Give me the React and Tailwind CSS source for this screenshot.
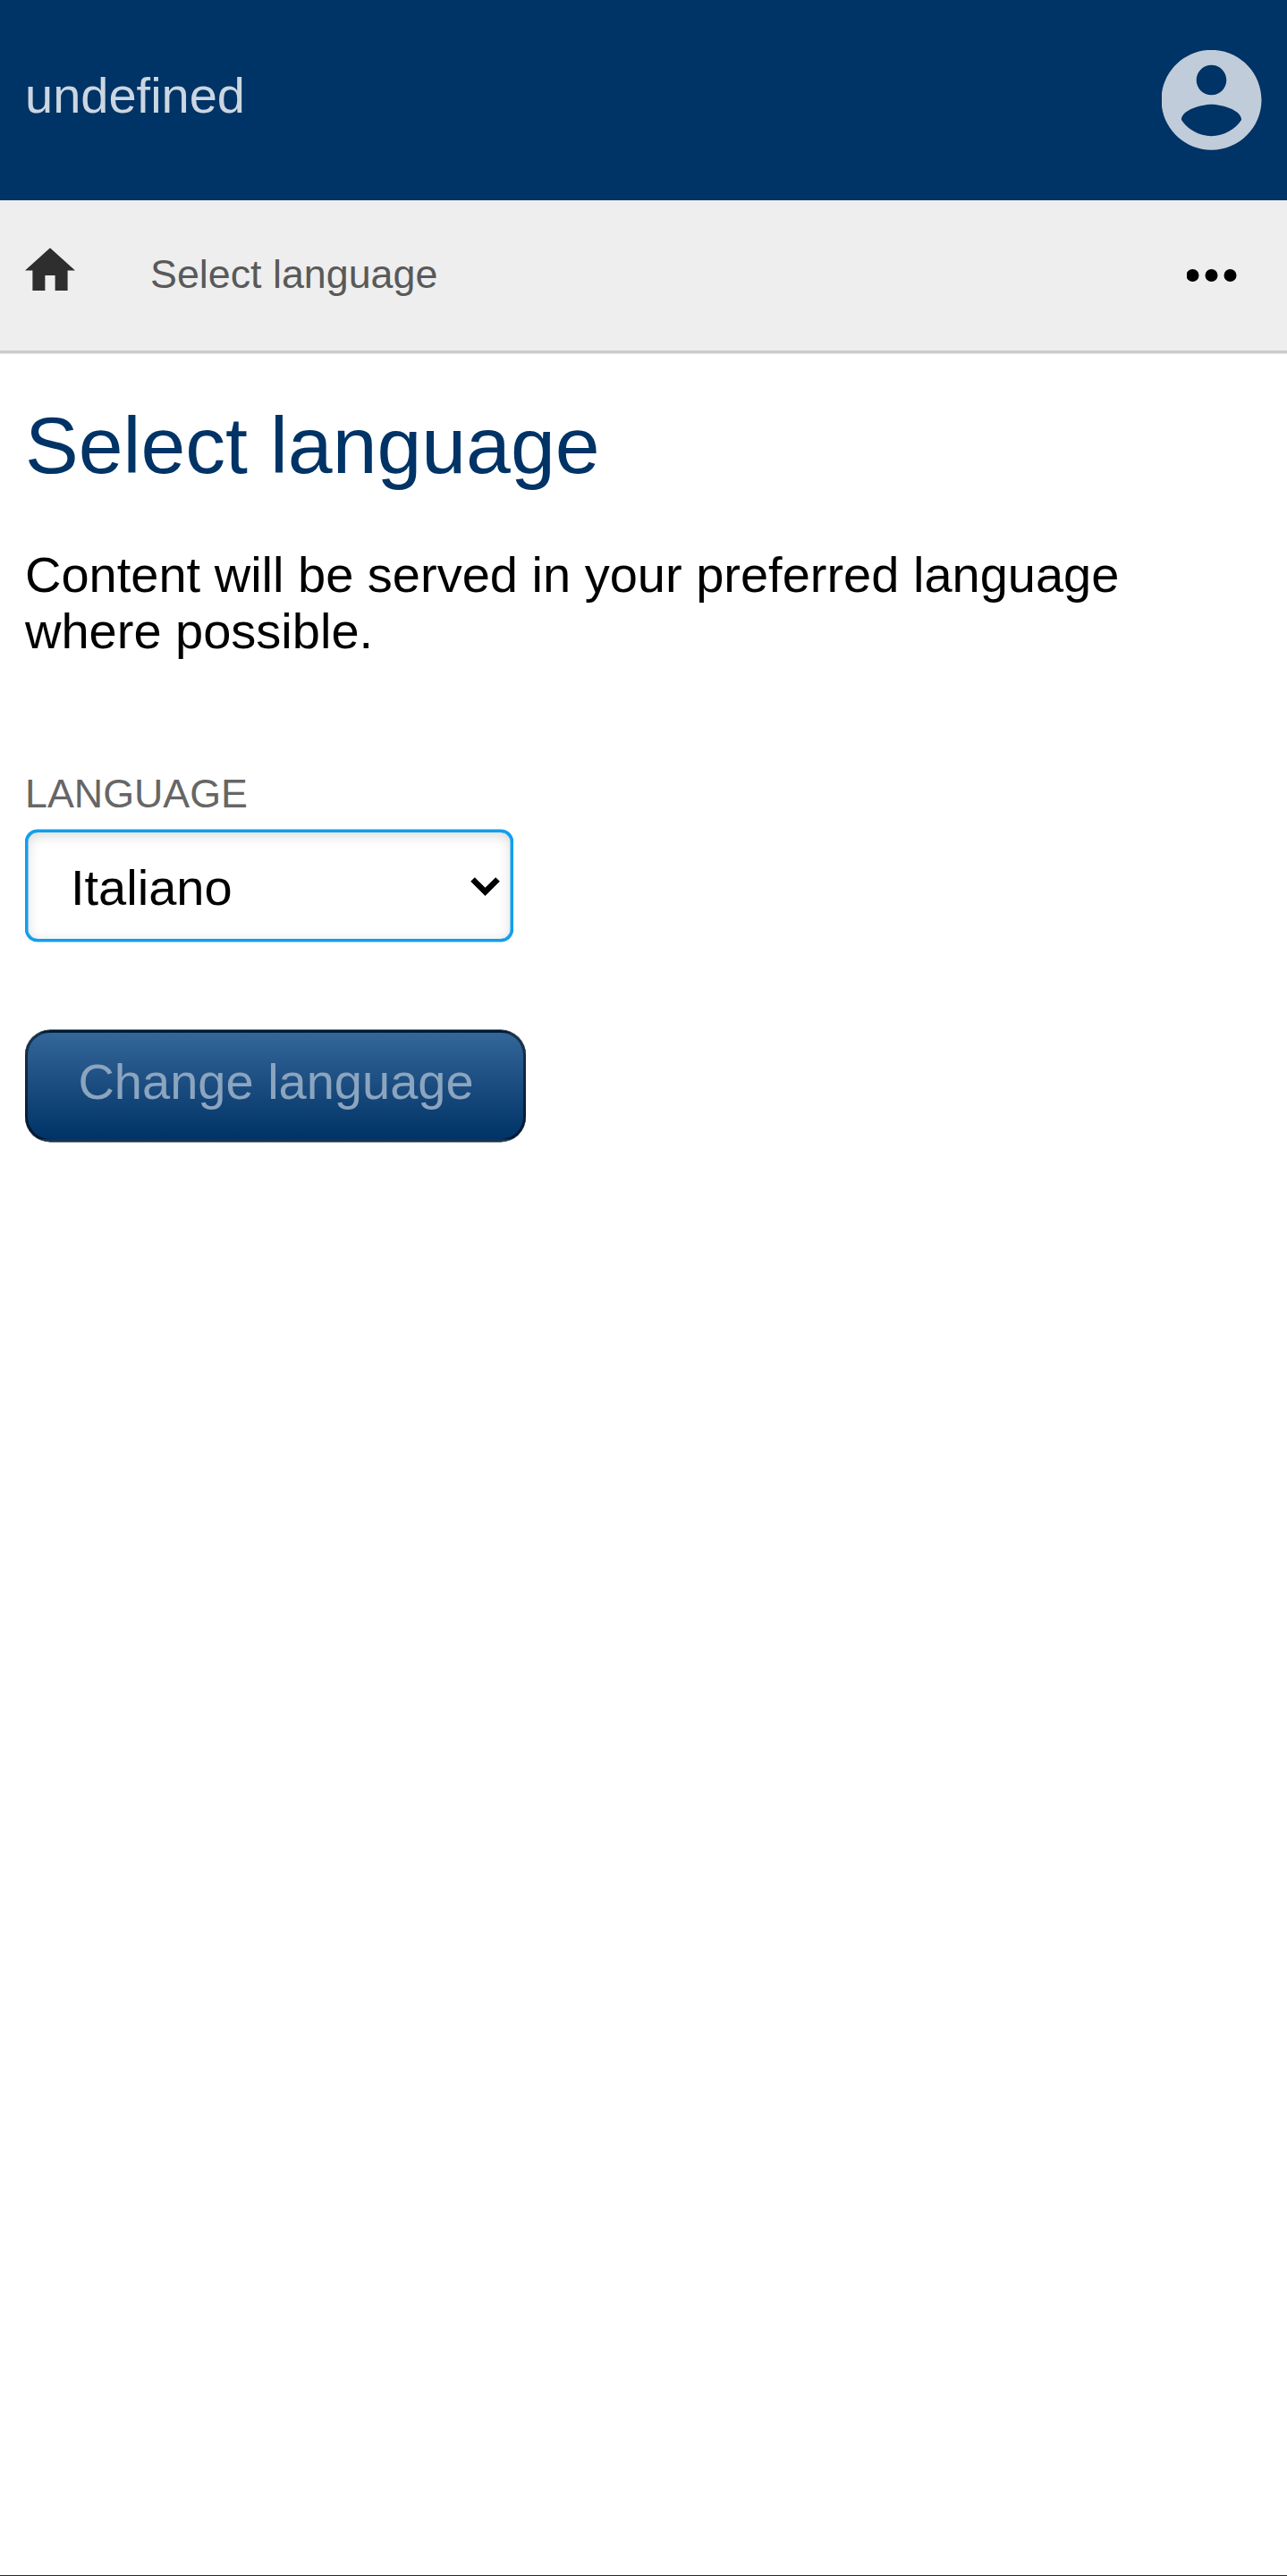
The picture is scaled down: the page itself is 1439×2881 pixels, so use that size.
export default function App() {
  return (
    <div className="flex h-[2881px] w-full flex-col overflow-hidden bg-white font-['Liberation_Sans',Arial,sans-serif] text-[56px] leading-[63px] text-black">
      <header className="flex h-[224px] shrink-0 items-start justify-between bg-[#003366] px-[28px]">
        <span className="mt-[75px] text-[#ccd6e0]">undefined</span>
        <svg className="mt-[56px] size-[112px]" viewBox="2.09 2.03 20 20" fill="#c0ccd9" aria-label="Account">
          <path d="M12 2C6.48 2 2 6.48 2 12s4.48 10 10 10 10-4.48 10-10S17.52 2 12 2zm0 3c1.66 0 3 1.34 3 3s-1.34 3-3 3-3-1.34-3-3 1.34-3 3-3zm0 14.2c-2.5 0-4.71-1.28-6-3.22.03-1.99 4-3.08 6-3.08 1.99 0 5.97 1.09 6 3.08-1.29 1.94-3.5 3.22-6 3.22z" />
        </svg>
      </header>

      <nav className="flex h-[168px] shrink-0 items-start bg-[#eeeeee] pl-[28px] pr-[55px]">
        <svg className="mt-[53px] h-[48px] w-[56px]" viewBox="2 2.9 20 17.143" fill="#2e2e2e" aria-label="Home">
          <path d="M10 20v-6h4v6h5v-8h3L12 3 2 12h3v8z" />
        </svg>
        <span className="ml-[84px] mt-[57px] text-[44.8px] leading-[51px] text-[#595959]">Select language</span>
        <svg className="ml-auto mt-[77px] h-[14px] w-[57px]" viewBox="0 0 57 14" aria-label="More">
          <circle cx="6.5" cy="7" r="7" />
          <circle cx="27.5" cy="7" r="7" />
          <circle cx="48.5" cy="7" r="7" />
        </svg>
      </nav>
      <div className="h-[4px] shrink-0 border-b border-[#e5e5e5] bg-[#cccccc]" />

      <main className="flex grow flex-col items-start px-[28px]">
        <h1 className="mt-[51px] text-[89.6px] leading-[102px] text-[#003366]">Select language</h1>
        <p className="mt-[62px] w-[1300px]">
          Content will be served in your preferred language where possible.
        </p>
        <label htmlFor="language" className="mt-[125px] text-[44.8px] leading-[51px] text-[#666666]">
          LANGUAGE
        </label>
        <div className="relative mt-[15px]">
          <select
            id="language"
            className="block h-[125px] w-[546px] appearance-none rounded-[14px] border-[3px] border-[#129fea] bg-white pt-[4px] pl-[48px] shadow-[0_-0.5px_0_0_#129fea,0_0.5px_0_0_#129fea,inset_0.5px_0_0_0_#129fea,inset_-0.5px_0_0_0_#129fea,inset_0_3.5px_14px_rgba(0,0,0,0.15)] outline-none"
          >
            <option>Italiano</option>
          </select>
          <svg className="pointer-events-none absolute right-[15px] top-[53px] h-[22px] w-[33px]" viewBox="0 0 33 22" fill="none" stroke="#000" strokeWidth="6.5">
            <path d="M2.5 2.5L16.5 16.4L30.5 2.5" />
          </svg>
        </div>
        <button className="mt-[99px] h-[125px] w-[560px] rounded-[28px] border-[3px] border-black/50 bg-linear-to-b from-[#336699] to-[#003366] pb-[10px] pl-px text-center text-[#8ca5bf] shadow-[0_-0.5px_0_0_#001a33,0_0.5px_0_0_#1a334c]">
          Change language
        </button>
      </main>
      <div className="h-px shrink-0 bg-[#003366]" />
    </div>
  );
}
